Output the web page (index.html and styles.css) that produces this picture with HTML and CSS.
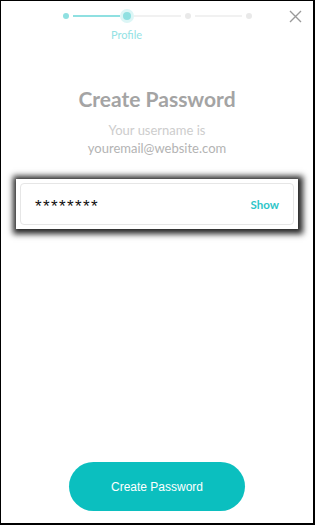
FILE: index.html
```html
<!DOCTYPE html>
<html lang="en">
<head>
<meta charset="utf-8">
<title>Create Password</title>
<link rel="stylesheet" href="styles.css">
</head>
<body>
<div class="screen">
  <header class="header">
    <div class="stepper">
      <div class="step done"><span class="dot"></span></div>
      <div class="line done"></div>
      <div class="step current"><span class="dot"></span><span class="label">Profile</span></div>
      <div class="line"></div>
      <div class="step"><span class="dot"></span></div>
      <div class="line"></div>
      <div class="step"><span class="dot"></span></div>
    </div>
    <button class="close" aria-label="Close">
      <svg width="13" height="13" viewBox="0 0 13 13"><path d="M1 1 L12 12 M12 1 L1 12" stroke="#9a9a9a" stroke-width="1.4" fill="none"/></svg>
    </button>
  </header>
  <main class="content">
    <h1 class="title">Create Password</h1>
    <p class="sub">Your username is</p>
    <p class="email">youremail@website.com</p>
    <div class="field-frame">
      <div class="field">
        <span class="value">********</span>
        <span class="show">Show</span>
      </div>
    </div>
  </main>
  <div class="footer">
    <button class="primary">Create Password</button>
  </div>
</div>
</body>
</html>
```

FILE: styles.css
```css
html, body {
  margin: 0;
  padding: 0;
  background: #fff;
}

.screen {
  width: 315px;
  height: 525px;
  box-sizing: border-box;
  border-style: solid;
  border-color: #000;
  border-width: 1px 2px 2px 1px;
  display: flex;
  flex-direction: column;
  position: relative;
  font-family: "Lato", "Liberation Sans", sans-serif;
  background: #fff;
}

.header {
  padding-top: 8px;
  display: flex;
  justify-content: center;
}

.stepper {
  display: flex;
  align-items: flex-start;
}

.step {
  width: 14px;
  display: flex;
  flex-direction: column;
  align-items: center;
}

.dot {
  width: 14px;
  height: 14px;
  display: flex;
  align-items: center;
  justify-content: center;
  border-radius: 50%;
}

.dot::after {
  content: "";
  width: 6px;
  height: 6px;
  border-radius: 50%;
  background: #e9e9e9;
}

.step.done .dot::after {
  background: #8fe0e1;
}

.step.current .dot {
  background: #dcf6f6;
}

.step.current .dot::after {
  width: 8px;
  height: 8px;
  background: #8fe0e1;
}

.label {
  margin-top: 5px;
  font-size: 11px;
  line-height: 13px;
  color: #93e2e4;
  white-space: nowrap;
}

.line {
  width: 47px;
  height: 2px;
  margin-top: 6px;
  background: #f1f1f1;
}

.line.done {
  background: #8fe0e1;
}

.close {
  position: absolute;
  top: 9px;
  right: 11px;
  border: 0;
  background: none;
  padding: 0;
  width: 13px;
  height: 13px;
  display: flex;
  cursor: pointer;
}

.content {
  display: flex;
  flex-direction: column;
  align-items: center;
}

.title {
  margin: 45px 0 0;
  font-size: 21px;
  line-height: 26px;
  font-weight: 700;
  color: #a4a4a4;
}

.sub, .email {
  margin: 0;
  font-size: 13px;
  line-height: 18px;
}

.sub {
  margin-top: 9px;
  color: #cdcdcd;
}

.email {
  color: #b3b3b3;
}

.field-frame {
  align-self: stretch;
  margin: 22px 15px 0;
  padding: 4px;
  background: #fff;
  box-shadow: 1px 1px 6px 4px rgba(0, 0, 0, 0.85);
}

.field {
  height: 42px;
  box-sizing: border-box;
  border: 1px solid #e6e6e6;
  border-radius: 4px;
  padding: 0 14px;
  display: flex;
  align-items: center;
  justify-content: space-between;
}

.value {
  font-family: "Liberation Sans", Arial, sans-serif;
  font-size: 17px;
  letter-spacing: 1.4px;
  color: #111;
  padding-top: 5px;
}

.show {
  font-size: 11.5px;
  font-weight: 700;
  color: #2ec5c8;
}

.footer {
  flex: 1;
  display: flex;
  align-items: flex-end;
  justify-content: center;
  padding-bottom: 12px;
}

.primary {
  width: 176px;
  height: 49px;
  border: 0;
  border-radius: 25px;
  background: #0bbfbf;
  color: #fff;
  font-family: "Liberation Sans", Arial, sans-serif;
  font-size: 12px;
  cursor: pointer;
}
```
